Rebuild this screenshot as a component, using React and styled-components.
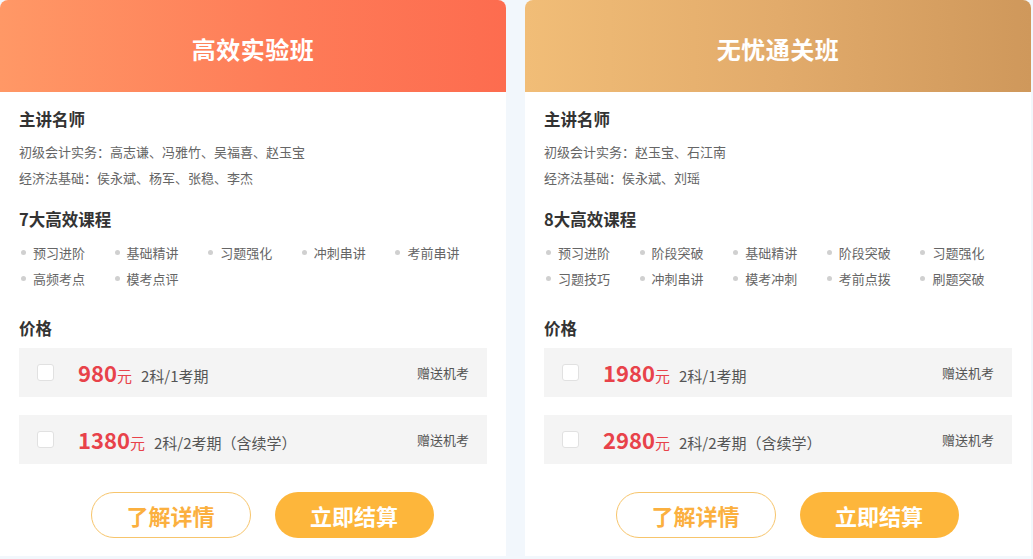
import React from 'react'
import styled, { createGlobalStyle } from 'styled-components'

const GlobalStyle = createGlobalStyle`
  html, body {
    margin: 0;
    padding: 0;
    background: #f2f7fc;
    font-family: "Noto Sans CJK SC", "Noto Sans", sans-serif;
  }
`

const Page = styled.div`
  display: grid;
  grid-template-columns: 506px 506px;
  column-gap: 19px;
  width: 1033px;
  height: 559px;
  overflow: hidden;
`

const Card = styled.div`
  background: #fff;
  border-radius: 8px 8px 0 0;
  height: 556px;
  display: flex;
  flex-direction: column;
  overflow: hidden;
`

const Header = styled.div`
  height: 92px;
  box-sizing: border-box;
  padding-top: 5px;
  display: flex;
  align-items: center;
  justify-content: center;
  background: ${props => props.gradient};
  color: #fff;
  font-size: 24px;
  font-weight: 700;
  letter-spacing: 0.5px;
`

const Body = styled.div`
  padding: 15px 19px 18px;
  display: flex;
  flex-direction: column;
`

const SectionTitle = styled.div`
  font-size: 16.5px;
  font-weight: 700;
  color: #333;
  line-height: 24px;
  margin-top: ${props => props.top || 0}px;
`

const InfoLine = styled.div`
  font-size: 13px;
  color: #666;
  line-height: 26px;
`

const Lines = styled.div`
  margin-top: 8px;
`

const CourseGrid = styled.div`
  margin-top: 8px;
  display: grid;
  grid-template-columns: repeat(5, 1fr);
  grid-auto-rows: 26px;
`

const CourseItem = styled.div`
  display: flex;
  align-items: center;
  font-size: 13px;
  color: #666;
  padding-left: 2px;
  &::before {
    content: '';
    width: 5px;
    height: 5px;
    border-radius: 50%;
    background: #d0d0d0;
    margin-right: 7px;
  }
`

const PriceList = styled.div`
  margin-top: 8px;
  display: flex;
  flex-direction: column;
  gap: 18px;
`

const PriceRow = styled.div`
  height: 49px;
  background: #f4f4f4;
  display: flex;
  align-items: center;
  padding: 0 18px;
`

const Check = styled.span`
  width: 15px;
  height: 15px;
  border: 1px solid #e1e1e1;
  border-radius: 3px;
  background: #fff;
  margin-right: 24px;
  flex-shrink: 0;
`

const Amount = styled.span`
  color: #e8424a;
  font-size: 22px;
  font-weight: 700;
  line-height: 1;
`

const Unit = styled.span`
  color: #e8424a;
  font-size: 15px;
  margin-right: 9px;
`

const Spec = styled.span`
  color: #555;
  font-size: 15px;
  flex: 1;
`

const Gift = styled.span`
  color: #555;
  font-size: 13px;
`

const PriceMain = styled.div`
  display: flex;
  align-items: baseline;
  flex: 1;
  padding-top: 2px;
`

const Actions = styled.div`
  margin-top: 28px;
  display: flex;
  justify-content: center;
  gap: 24px;
  padding-left: 18px;
`

const Button = styled.div`
  width: ${props => (props.primary ? 159 : 160)}px;
  height: 46px;
  box-sizing: border-box;
  border-radius: 23px;
  display: flex;
  align-items: center;
  justify-content: center;
  font-size: 22px;
  font-weight: 700;
  background: ${props => (props.primary ? '#fdb63b' : '#fff')};
  color: ${props => (props.primary ? '#fff' : '#fbb03f')};
  border: ${props => (props.primary ? 'none' : '1px solid #f7c56c')};
`

const plans = [
  {
    title: '高效实验班',
    gradient: 'linear-gradient(90deg, #ff9866 0%, #fe7c58 55%, #fd6c4f 100%)',
    teachers: ['初级会计实务：高志谦、冯雅竹、吴福喜、赵玉宝', '经济法基础：侯永斌、杨军、张稳、李杰'],
    courseTitle: '7大高效课程',
    courses: ['预习进阶', '基础精讲', '习题强化', '冲刺串讲', '考前串讲', '高频考点', '模考点评'],
    prices: [
      { amount: '980', spec: '2科/1考期' },
      { amount: '1380', spec: '2科/2考期（含续学）' },
    ],
  },
  {
    title: '无忧通关班',
    gradient: 'linear-gradient(90deg, #f1bd77 0%, #e2ab6b 50%, #cf985b 100%)',
    teachers: ['初级会计实务：赵玉宝、石江南', '经济法基础：侯永斌、刘瑶'],
    courseTitle: '8大高效课程',
    courses: ['预习进阶', '阶段突破', '基础精讲', '阶段突破', '习题强化', '习题技巧', '冲刺串讲', '模考冲刺', '考前点拨', '刷题突破'],
    prices: [
      { amount: '1980', spec: '2科/1考期' },
      { amount: '2980', spec: '2科/2考期（含续学）' },
    ],
  },
]

const PlanCard = ({ plan }) => (
  <Card>
    <Header gradient={plan.gradient}>{plan.title}</Header>
    <Body>
      <SectionTitle>主讲名师</SectionTitle>
      <Lines>
        {plan.teachers.map(t => (
          <InfoLine key={t}>{t}</InfoLine>
        ))}
      </Lines>
      <SectionTitle top={16}>{plan.courseTitle}</SectionTitle>
      <CourseGrid>
        {plan.courses.map((c, i) => (
          <CourseItem key={i}>{c}</CourseItem>
        ))}
      </CourseGrid>
      <SectionTitle top={25}>价格</SectionTitle>
      <PriceList>
        {plan.prices.map(p => (
          <PriceRow key={p.amount}>
            <Check />
            <PriceMain>
              <Amount>{p.amount}</Amount>
              <Unit>元</Unit>
              <Spec>{p.spec}</Spec>
            </PriceMain>
            <Gift>赠送机考</Gift>
          </PriceRow>
        ))}
      </PriceList>
      <Actions>
        <Button>了解详情</Button>
        <Button primary>立即结算</Button>
      </Actions>
    </Body>
  </Card>
)

export default function App() {
  return (
    <>
      <GlobalStyle />
      <Page>
        {plans.map(p => (
          <PlanCard key={p.title} plan={p} />
        ))}
      </Page>
    </>
  )
}
